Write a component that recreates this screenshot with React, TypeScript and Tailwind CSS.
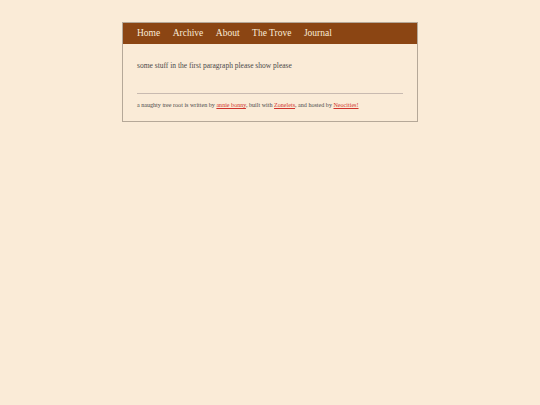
export default function App() {
  const links = ['Home', 'Archive', 'About', 'The Trove', 'Journal'];
  return (
    <div className="min-h-[405px] bg-[#faebd7] pt-[22px] font-['Liberation_Serif',serif]">
      <div className="mx-auto w-[296px] border border-[#b5a898] bg-[#faebd7]">
        <nav className="flex h-[21px] items-center gap-[12.5px] bg-[#8b4513] px-[14px] text-[9.5px] text-[#faebd7]">
          {links.map((l) => (
            <a key={l} href="#" className="leading-none">{l}</a>
          ))}
        </nav>
        <div className="px-[14px] pt-[16px] pb-[11px] text-[#4a4a4a]">
          <p className="text-[7.5px] leading-[12px]">some stuff in the first paragraph please show please</p>
          <hr className="mt-[21px] border-t border-[#c8bab0]" />
          <p className="mt-[7px] text-[6.1px] leading-[9px]">
            a naughty tree root is written by <a href="#" className="text-[#d0342c] underline">annie bonny</a>, built with{' '}
            <a href="#" className="text-[#d0342c] underline">Zonelets</a>, and hosted by{' '}
            <a href="#" className="text-[#d0342c] underline">Neocities!</a>
          </p>
        </div>
      </div>
    </div>
  );
}
